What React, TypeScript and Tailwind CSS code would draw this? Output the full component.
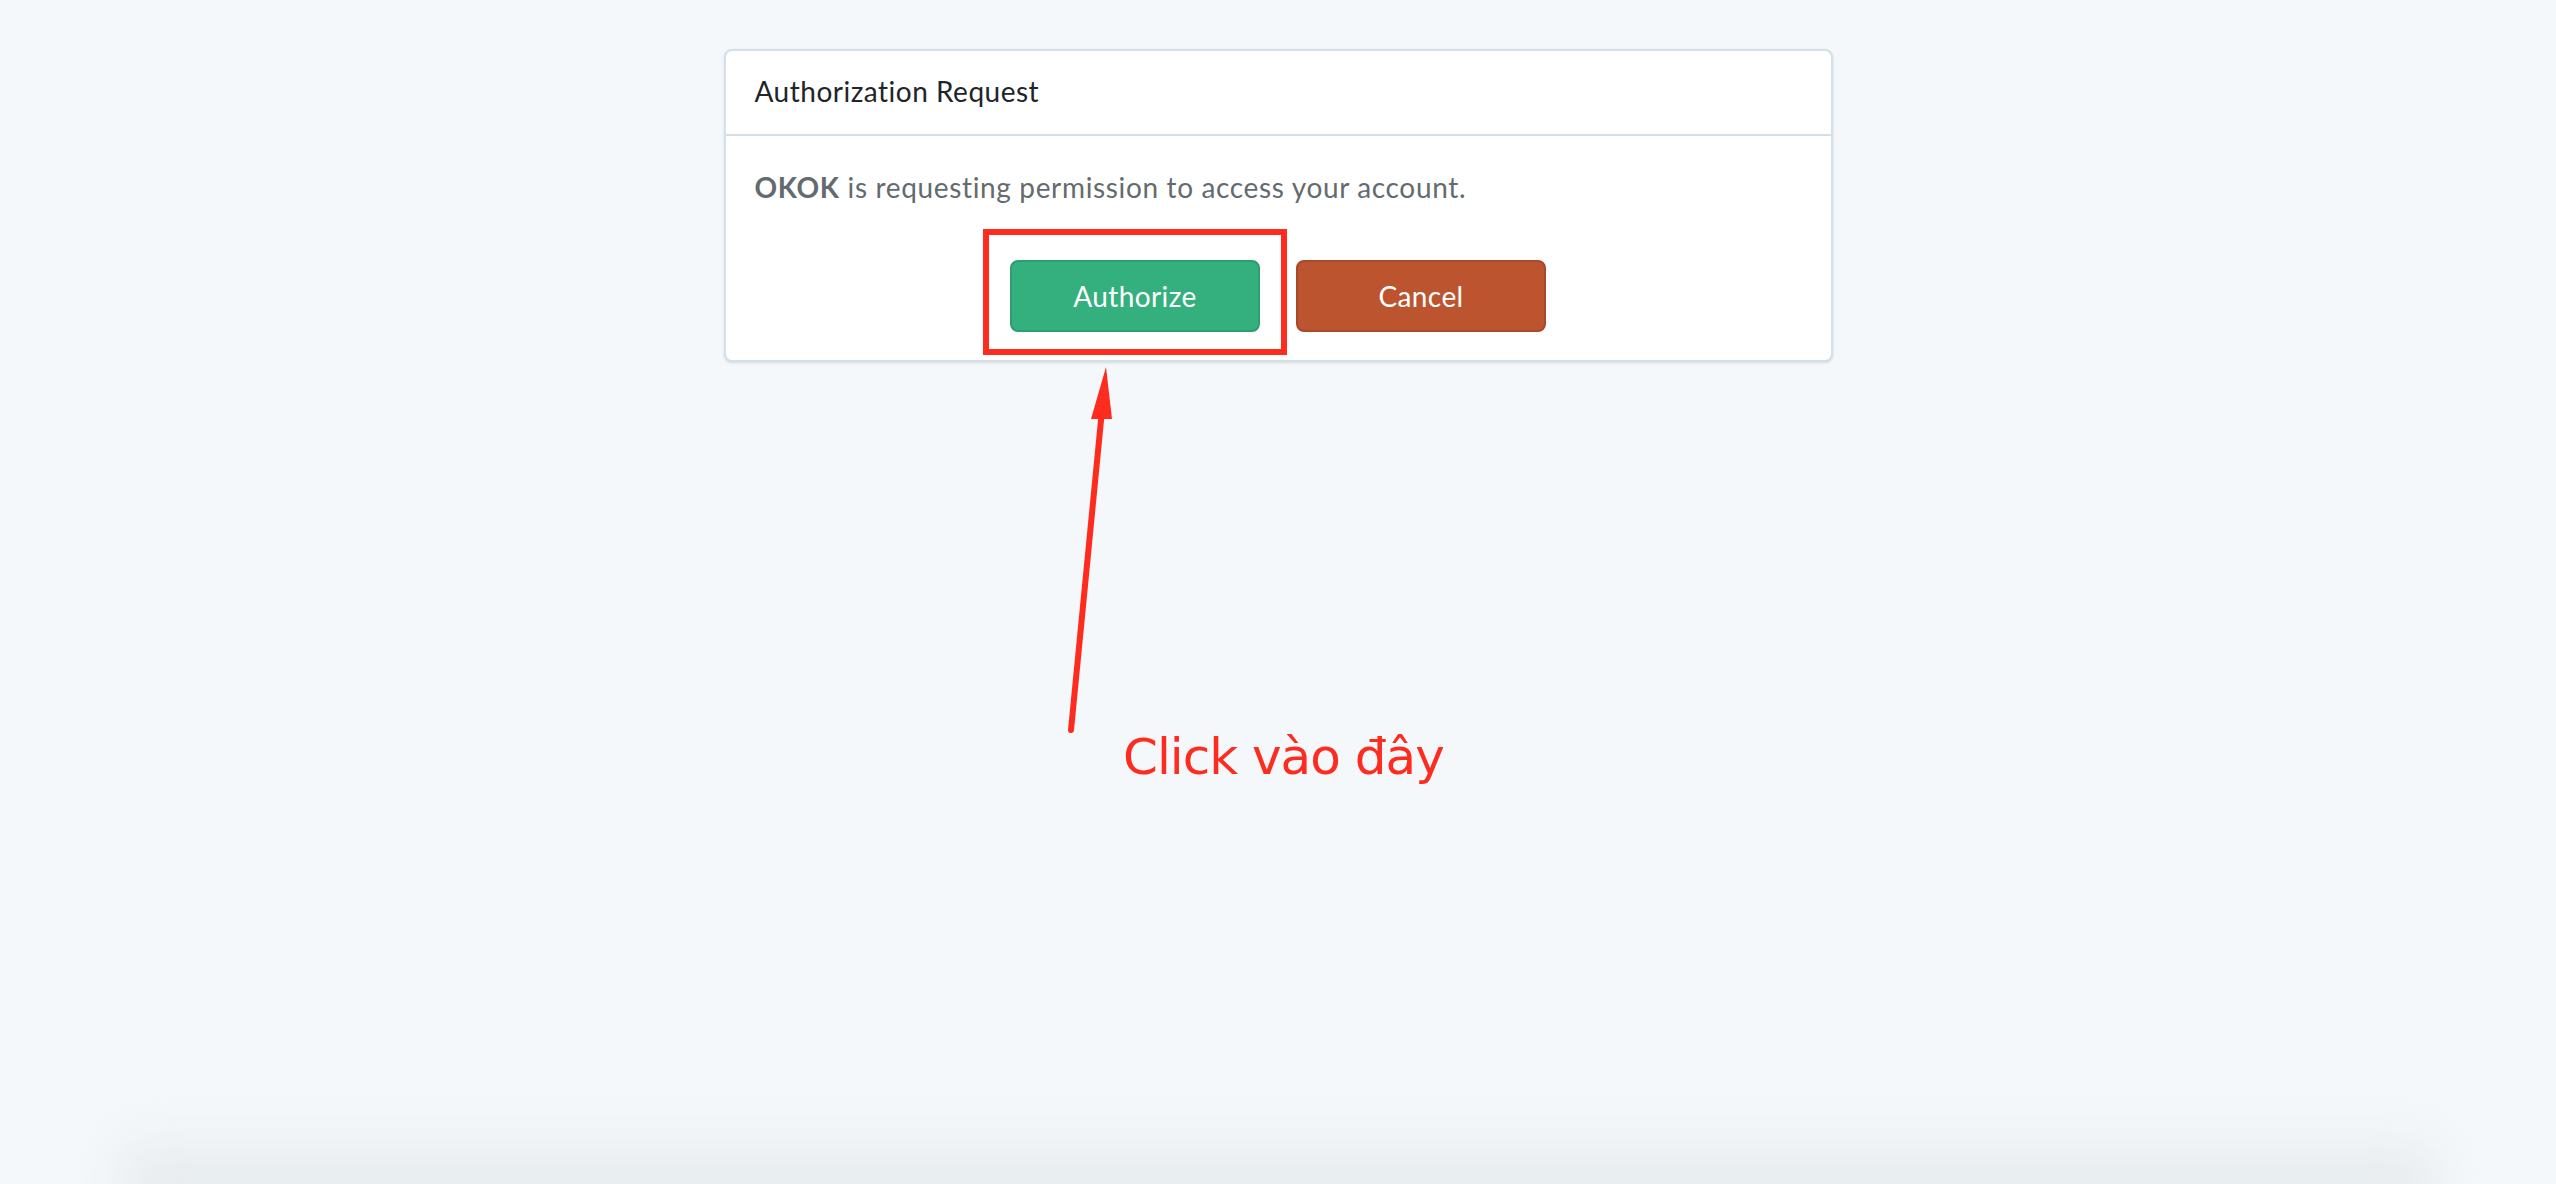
import React from 'react';

const App: React.FC = () => {
  return (
    <div className="relative w-full h-[1184px] overflow-hidden bg-[#f5f8fa]" style={{ fontFamily: 'Lato, "Open Sans", sans-serif' }}>
      <div className="flex justify-center pt-[49px]">
        <div className="w-[1109px] bg-white border-2 border-[#d3e0e9] rounded-[8px] shadow-sm">
          <div className="px-[29px] pt-[17px] pb-[20px] border-b-2 border-[#d3e0e9]">
            <h1 className="text-[28px] leading-[46px] tracking-[0.5px] text-[#212529]">Authorization Request</h1>
          </div>
          <div className="px-[29px] pt-[28px] pb-[28px]">
            <p className="text-[28px] leading-[46px] tracking-[0.65px] text-[#636b6f]">
              <strong className="font-bold">OKOK</strong> is requesting permission to access your account.
            </p>
            <div className="flex justify-center gap-[36px] mt-[50px]">
              <button className="w-[250px] h-[72px] rounded-[8px] bg-[#34b07e] border-2 border-[#2f9d70] text-white text-[28px] tracking-[0.4px]">
                Authorize
              </button>
              <button className="w-[250px] h-[72px] rounded-[8px] bg-[#bc552f] border-2 border-[#a84a29] text-white text-[28px] tracking-[0.4px]">
                Cancel
              </button>
            </div>
          </div>
        </div>
      </div>

      {/* annotation: red box around Authorize */}
      <div className="absolute left-[983px] top-[229px] w-[304px] h-[126px] border-[6px] border-[#fe2b1f]" />

      {/* annotation: arrow */}
      <svg className="absolute left-[1040px] top-[350px]" width="100" height="400" viewBox="0 0 100 400">
        <line x1="31" y1="380" x2="62" y2="60" stroke="#fe2b1f" strokeWidth="6" strokeLinecap="round" />
        <polygon points="66,17 51,69 72,69" fill="#fe2b1f" />
      </svg>

      <div
        className="absolute left-[1123px] top-[732px] text-[50px] leading-[50px] tracking-[-1px] text-[#fe2b1f] whitespace-nowrap"
        style={{ fontFamily: '"DejaVu Sans", Verdana, sans-serif' }}
      >
        Click vào đây
      </div>

      {/* soft shadow strip at the bottom edge */}
      <div className="absolute left-[120px] right-[120px] bottom-[-20px] h-[80px] bg-gradient-to-b from-transparent to-[#dfe4e8] blur-xl" />
    </div>
  );
};

export default App;
